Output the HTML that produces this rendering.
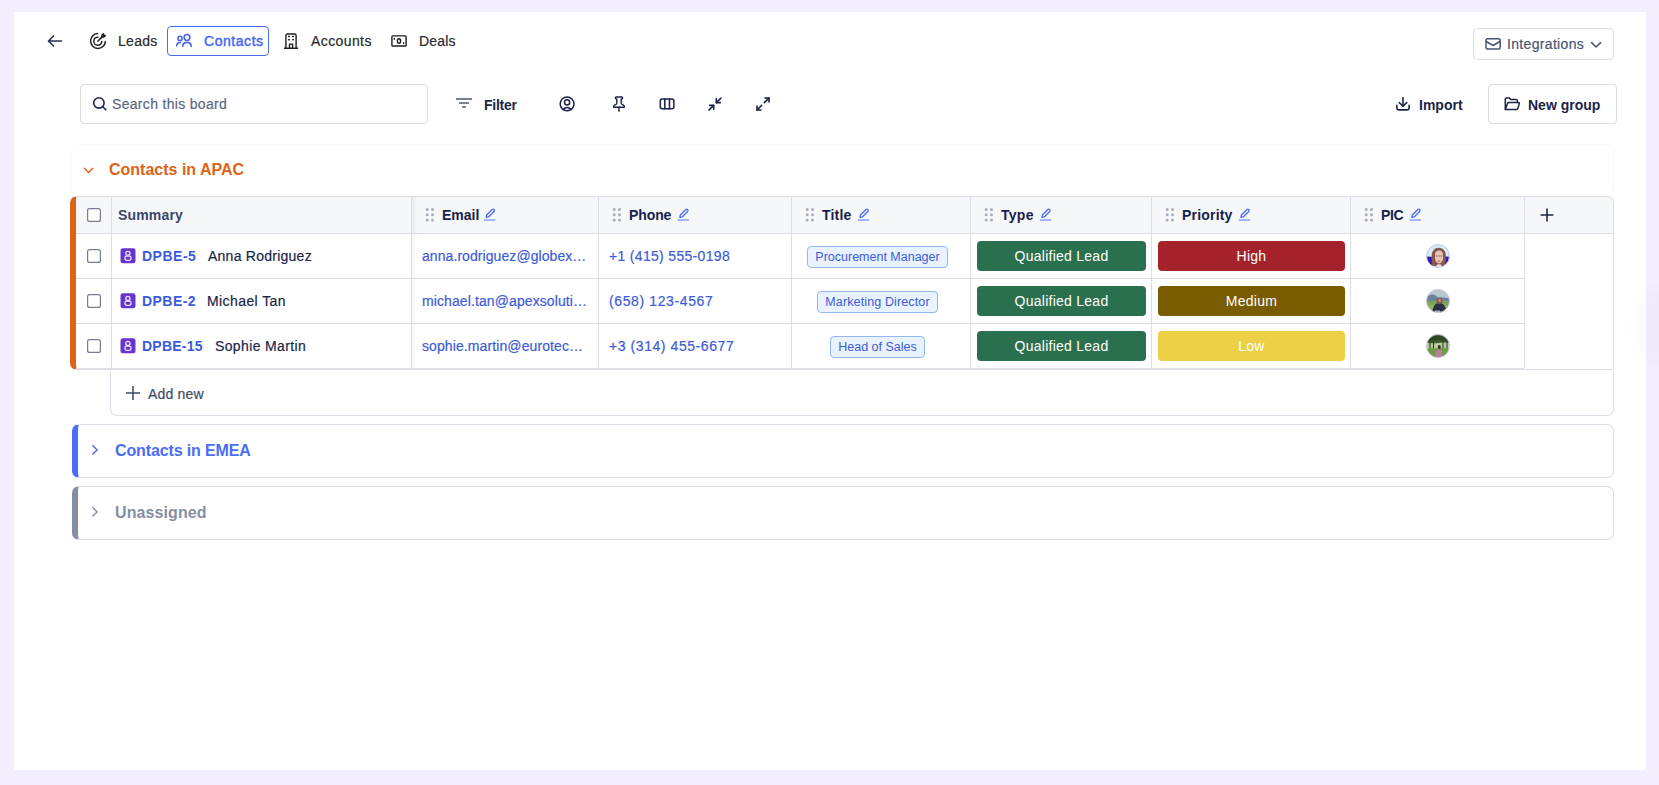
<!DOCTYPE html>
<html><head><meta charset="utf-8">
<style>
html,body{margin:0;padding:0}
body{width:1659px;height:785px;overflow:hidden;background:#f2eefd;position:relative;font-family:"Liberation Sans",sans-serif;color:#1c2548}
.panel{position:absolute;left:14px;top:12px;width:1632px;height:758px;background:#fff}
.t{position:absolute;white-space:nowrap;line-height:1;font-size:14px;-webkit-text-stroke:0.2px currentColor}
.b{-webkit-text-stroke:0}
.b{font-weight:bold}
.box{position:absolute;box-sizing:border-box}
.ln{position:absolute;background:#dcdde5}
.chip{position:absolute;box-sizing:border-box;height:22px;border:1px solid #92b6f6;background:#e9f3ff;border-radius:4px;color:#3d5bd9;font-size:12.5px;line-height:20px;text-align:center;white-space:nowrap}
.badge{position:absolute;box-sizing:border-box;height:30px;border-radius:4px;color:#fff;font-size:14px;line-height:30px;text-align:center;white-space:nowrap;letter-spacing:0.26px}
.hd{color:#18214a}
.lnk{color:#3d5bd9}
.nm{color:#1c2548}
.av{position:absolute;width:24px;height:24px;border-radius:50%;overflow:hidden;box-sizing:border-box}
svg.ov{position:absolute;left:0;top:0}
</style></head>
<body>
<div class="panel"></div>
<div style="position:absolute;left:1628px;top:280px;width:64px;height:92px;border-radius:50%;background:radial-gradient(closest-side,rgba(90,70,150,0.035),rgba(90,70,150,0.02) 70%,rgba(90,70,150,0))"></div>

<!-- NAV text -->
<span class="t" style="left:118px;top:34px;color:#2a2a2e;letter-spacing:0.3px">Leads</span>
<div class="box" style="left:167px;top:26px;width:102px;height:30px;border:1px solid #4a6cf5;border-radius:4px"></div>
<span class="t" style="left:204px;top:34px;color:#4866f6;letter-spacing:0.55px;-webkit-text-stroke:0.45px #4866f6">Contacts</span>
<span class="t" style="left:311px;top:34px;color:#2a2a2e;letter-spacing:0.4px">Accounts</span>
<span class="t" style="left:419px;top:34px;color:#2a2a2e;letter-spacing:0.15px">Deals</span>

<!-- Integrations -->
<div class="box" style="left:1473px;top:28px;width:141px;height:32px;border:1px solid #dcdde6;border-radius:4px"></div>
<span class="t" style="left:1507px;top:37px;color:#4a5572;letter-spacing:0.33px">Integrations</span>

<!-- Toolbar -->
<div class="box" style="left:80px;top:84px;width:348px;height:40px;border:1px solid #dcdde6;border-radius:4px"></div>
<span class="t" style="left:112px;top:97px;color:#5d6783;letter-spacing:0.32px">Search this board</span>
<span class="t b" style="left:484px;top:98px;color:#1c2548;letter-spacing:-0.25px">Filter</span>
<span class="t b" style="left:1419px;top:98px;color:#1c2548">Import</span>
<div class="box" style="left:1488px;top:84px;width:129px;height:40px;border:1px solid #dcdde6;border-radius:4px"></div>
<span class="t b" style="left:1528px;top:98px;color:#1c2548">New group</span>

<!-- APAC group -->
<div class="box" style="left:71px;top:144px;width:1543px;height:54px;border:1px solid #fafafb;border-radius:8px"></div>
<span class="t b" style="left:109px;top:162px;font-size:16px;color:#dc6318">Contacts in APAC</span>

<!-- TABLE -->
<div class="box" style="left:70px;top:196px;width:1544px;height:174px;border:1px solid #dcdde5;border-left:6px solid #dc6318;border-radius:7px 7px 0 7px;background:#fff;overflow:hidden">
  <div style="position:absolute;left:0;top:0;right:0;height:36px;background:#f6f7f9"></div>
</div>
<!-- header bottom + row lines -->
<div class="ln" style="left:76px;top:233px;width:1537px;height:1px"></div>
<div class="ln" style="left:76px;top:278px;width:1448px;height:1px"></div>
<div class="ln" style="left:76px;top:323px;width:1448px;height:1px"></div>
<div class="ln" style="left:76px;top:368px;width:1448px;height:1px"></div>
<!-- vertical dividers -->
<div class="ln" style="left:111px;top:197px;width:1px;height:171px"></div>
<div class="ln" style="left:411px;top:197px;width:1px;height:171px"></div>
<div class="ln" style="left:598px;top:197px;width:1px;height:171px"></div>
<div class="ln" style="left:791px;top:197px;width:1px;height:171px"></div>
<div class="ln" style="left:970px;top:197px;width:1px;height:171px"></div>
<div class="ln" style="left:1151px;top:197px;width:1px;height:171px"></div>
<div class="ln" style="left:1350px;top:197px;width:1px;height:171px"></div>
<div class="ln" style="left:1524px;top:197px;width:1px;height:171px"></div>
<!-- sticky shadow -->
<div style="position:absolute;left:412px;top:197px;width:5px;height:171px;background:linear-gradient(90deg,rgba(30,40,80,0.05),rgba(30,40,80,0))"></div>

<!-- header text -->
<span class="t b" style="left:118px;top:208px;color:#3b4666;letter-spacing:0.17px">Summary</span>
<span class="t b hd" style="left:442px;top:208px">Email</span>
<span class="t b hd" style="left:629px;top:208px;letter-spacing:-0.1px">Phone</span>
<span class="t b hd" style="left:822px;top:208px;letter-spacing:0.2px">Title</span>
<span class="t b hd" style="left:1001px;top:208px;letter-spacing:0.27px">Type</span>
<span class="t b hd" style="left:1182px;top:208px;letter-spacing:0.19px">Priority</span>
<span class="t b hd" style="left:1381px;top:208px;letter-spacing:-0.35px">PIC</span>

<!-- rows: summary -->
<span class="t b lnk" style="left:142px;top:249px;color:#3b5bdb;letter-spacing:0.5px">DPBE-5</span>
<span class="t nm" style="left:208px;top:249px;letter-spacing:0.25px">Anna Rodriguez</span>
<span class="t b lnk" style="left:142px;top:294px;color:#3b5bdb;letter-spacing:0.44px">DPBE-2</span>
<span class="t nm" style="left:207px;top:294px;letter-spacing:0.41px">Michael Tan</span>
<span class="t b lnk" style="left:142px;top:339px;color:#3b5bdb;letter-spacing:0.22px">DPBE-15</span>
<span class="t nm" style="left:215px;top:339px;letter-spacing:0.37px">Sophie Martin</span>

<!-- email -->
<span class="t lnk" style="left:422px;top:249px;letter-spacing:0.07px">anna.rodriguez@globex…</span>
<span class="t lnk" style="left:422px;top:294px;letter-spacing:0.1px">michael.tan@apexsoluti…</span>
<span class="t lnk" style="left:422px;top:339px;letter-spacing:0.1px">sophie.martin@eurotec…</span>
<!-- phone -->
<span class="t lnk" style="left:609px;top:249px;letter-spacing:0.32px">+1 (415) 555-0198</span>
<span class="t lnk" style="left:609px;top:294px;letter-spacing:0.62px">(658) 123-4567</span>
<span class="t lnk" style="left:609px;top:339px;letter-spacing:0.57px">+3 (314) 455-6677</span>
<!-- title chips -->
<div class="chip" style="left:807px;top:246px;width:141px">Procurement Manager</div>
<div class="chip" style="left:817px;top:291px;width:121px;letter-spacing:0.13px">Marketing Director</div>
<div class="chip" style="left:830px;top:336px;width:95px">Head of Sales</div>
<!-- type -->
<div class="badge" style="left:977px;top:241px;width:169px;background:#2b704e">Qualified Lead</div>
<div class="badge" style="left:977px;top:286px;width:169px;background:#2b704e">Qualified Lead</div>
<div class="badge" style="left:977px;top:331px;width:169px;background:#2b704e">Qualified Lead</div>
<!-- priority -->
<div class="badge" style="left:1158px;top:241px;width:187px;background:#a6222b">High</div>
<div class="badge" style="left:1158px;top:286px;width:187px;background:#7a5c00">Medium</div>
<div class="badge" style="left:1158px;top:331px;width:187px;background:#edd046">Low</div>

<!-- Add new -->
<div class="box" style="left:110px;top:371px;width:1504px;height:45px;border:1px solid #dcdde5;border-top:none;border-radius:0 0 7px 7px"></div>
<span class="t" style="left:148px;top:387px;color:#3d4a66;letter-spacing:0.2px">Add new</span>

<!-- EMEA -->
<div class="box" style="left:72px;top:424px;width:1542px;height:54px;border:1px solid #dcdde5;border-left:6px solid #4a6cf7;border-radius:7px"></div>
<span class="t b" style="left:115px;top:443px;font-size:16px;color:#4a6cf7;letter-spacing:-0.13px">Contacts in EMEA</span>
<!-- Unassigned -->
<div class="box" style="left:72px;top:486px;width:1542px;height:54px;border:1px solid #dcdde5;border-left:6px solid #868ea3;border-radius:7px"></div>
<span class="t b" style="left:115px;top:505px;font-size:16px;color:#868ea3;letter-spacing:0.1px">Unassigned</span>

<!-- ICONS overlay -->
<svg class="ov" width="1659" height="785" fill="none" stroke-linecap="round" stroke-linejoin="round">
  <!-- back arrow -->
  <path d="M48.5 41H61.5M53.5 36L48.5 41L53.5 46" stroke="#2a3453" stroke-width="1.7"/>
  <!-- leads target-arrow -->
  <g stroke="#1f1f23" stroke-width="1.5">
    <path d="M97.6 33.6A7.4 7.4 0 1 0 105.4 41.6"/>
    <path d="M97.8 37.2A4 4 0 1 0 101.8 41.4"/>
    <path d="M98 41L101.9 37.1"/>
    <path d="M101.9 37.1V35.3L103.5 33.7V35.5H105.3L103.7 37.1Z"/>
  </g>
  <!-- contacts users -->
  <g stroke="#4263eb" stroke-width="1.5">
    <circle cx="180" cy="38.4" r="2.1"/>
    <circle cx="187" cy="37.5" r="2.9"/>
    <path d="M176.6 45.8Q176.8 42.6 180.6 42.5"/>
    <path d="M182.8 46.4V45.6Q183 42.6 186.4 42.5H187.6Q191 42.6 191.2 45.6V46.4"/>
  </g>
  <!-- accounts building -->
  <g stroke="#1f1f23" stroke-width="1.4">
    <path d="M285.9 48.2V35.6Q285.9 34 287.5 34H294.5Q296.1 34 296.1 35.6V48.2"/>
    <path d="M284.5 48.3H297.5"/>
    <path d="M289.5 48.2V44.1H292.6V48.2"/>
    <path d="M288.7 36.5H289.3M292.7 36.5H293.3M288.7 39.7H289.3M292.7 39.7H293.3" stroke-width="1.6"/>
  </g>
  <!-- deals banknote -->
  <g stroke="#1f1f23" stroke-width="1.4">
    <rect x="391.9" y="35.9" width="14.2" height="10.1" rx="0.8"/>
    <ellipse cx="399" cy="41" rx="1.6" ry="2.3"/>
    <path d="M394.3 38.4V39.2M403.6 42.8V43.6"/>
  </g>
  <!-- search -->
  <g stroke="#1c2548" stroke-width="1.6">
    <circle cx="98.9" cy="102.9" r="5.2"/>
    <path d="M102.8 106.8L105.8 109.8"/>
  </g>
  <!-- filter -->
  <g stroke="#7b8399" stroke-width="1.8" stroke-linecap="butt">
    <path d="M456 99H472M459 103H469M462 107H466"/>
  </g>
  <!-- user circle -->
  <g stroke="#18214a" stroke-width="1.5">
    <circle cx="567.1" cy="103.9" r="6.9"/>
    <circle cx="567.1" cy="102.3" r="2.6"/>
    <path d="M563 109.4Q567.1 105.6 571.2 109.4"/>
  </g>
  <!-- pin -->
  <g stroke="#18214a" stroke-width="1.4">
    <path d="M619 107.2V111.3"/>
    <path d="M616.8 98.9V103Q616.8 104 615.9 104.5L614.6 105.2Q613.7 105.7 613.7 106.6V107.2H624.3V106.6Q624.3 105.7 623.4 105.2L622.1 104.5Q621.2 104 621.2 103V98.9H621.8Q622.6 98.9 622.6 97.9Q622.6 97 621.8 97H616.2Q615.4 97 615.4 97.9Q615.4 98.9 616.2 98.9Z"/>
  </g>
  <!-- columns -->
  <g stroke="#18214a" stroke-width="1.5">
    <rect x="660.3" y="99" width="13.6" height="9.7" rx="2"/>
    <path d="M664.8 99V108.7M669.5 99V108.7"/>
  </g>
  <!-- minimize-2 -->
  <g transform="translate(707 96) scale(0.6667)" stroke="#18214a" stroke-width="2.4">
    <polyline points="4 14 10 14 10 20"/><polyline points="20 10 14 10 14 4"/><line x1="14" x2="21" y1="10" y2="3"/><line x1="3" x2="10" y1="21" y2="14"/>
  </g>
  <!-- maximize-2 -->
  <g transform="translate(755 96) scale(0.6667)" stroke="#18214a" stroke-width="2.4">
    <polyline points="15 3 21 3 21 9"/><polyline points="9 21 3 21 3 15"/><line x1="21" x2="14" y1="3" y2="10"/><line x1="3" x2="10" y1="21" y2="14"/>
  </g>
  <!-- mail -->
  <g stroke="#475374" stroke-width="1.5">
    <rect x="1486" y="38.8" width="14.2" height="10.1" rx="1.8"/>
    <path d="M1486.2 41.5L1492.3 45Q1493.1 45.5 1493.9 45L1500 41.5"/>
  </g>
  <!-- chevron down -->
  <path d="M1591.6 42.6L1596.1 47L1600.6 42.6" stroke="#475374" stroke-width="1.5"/>
  <!-- download -->
  <g stroke="#1c2548" stroke-width="1.6">
    <path d="M1403 97.8V106.3"/>
    <path d="M1399.3 102.6L1403 106.3L1406.7 102.6"/>
    <path d="M1396.9 105.4V108.3Q1396.9 109.9 1398.5 109.9H1407.5Q1409.1 109.9 1409.1 108.3V105.4"/>
  </g>
  <!-- folder open -->
  <g stroke="#1c2548" stroke-width="1.5">
    <path d="M1505.3 109.6V98.9Q1505.3 97.9 1506.3 97.9H1509.2L1510.8 99.5H1516.3Q1517.3 99.5 1517.3 100.5V102.5"/>
    <path d="M1505.3 109.6L1507.5 103.4Q1507.8 102.5 1508.8 102.5H1518.5Q1519.6 102.5 1519.3 103.5L1517.7 108.9Q1517.4 109.6 1516.6 109.6Z"/>
  </g>
  <!-- APAC chevron -->
  <path d="M84.4 168.2L88.55 172.4L92.7 168.2" stroke="#dc6318" stroke-width="1.4"/>
  <!-- header checkbox & row checkboxes -->
  <g stroke="#737c94" stroke-width="1.2" fill="#fff">
    <rect x="87.6" y="208.6" width="12.8" height="12.8" rx="2"/>
    <rect x="87.6" y="249.6" width="12.8" height="12.8" rx="2"/>
    <rect x="87.6" y="294.6" width="12.8" height="12.8" rx="2"/>
    <rect x="87.6" y="339.6" width="12.8" height="12.8" rx="2"/>
  </g>
  <!-- drag dots -->
  <g fill="#a6acbb" stroke="none" id="dots">
    <circle cx="427.2" cy="209.6" r="1.5"/><circle cx="432.5" cy="209.6" r="1.5"/>
    <circle cx="427.2" cy="214.8" r="1.5"/><circle cx="432.5" cy="214.8" r="1.5"/>
    <circle cx="427.2" cy="220.1" r="1.5"/><circle cx="432.5" cy="220.1" r="1.5"/>
  </g>
  <use href="#dots" x="187"/>
  <use href="#dots" x="380"/>
  <use href="#dots" x="559"/>
  <use href="#dots" x="740"/>
  <use href="#dots" x="939"/>
  <!-- pencils -->
  <g id="pen">
    <path d="M486.3 217.4L486.7 215.1L492.2 209.6Q493.1 208.7 494 209.6Q494.9 210.5 494 211.4L488.5 216.9Z" stroke="#4c6ef5" stroke-width="1.35"/>
    <path d="M484 220H495.4" stroke="#91a7ff" stroke-width="1.6" stroke-linecap="butt"/>
  </g>
  <use href="#pen" x="193.6"/>
  <use href="#pen" x="373.8"/>
  <use href="#pen" x="555.7"/>
  <use href="#pen" x="754.7"/>
  <use href="#pen" x="925.6"/>
  <!-- plus header -->
  <path d="M1547 208.6V221.4M1540.6 215H1553.4" stroke="#1c2548" stroke-width="1.6" stroke-linecap="butt"/>
  <!-- lock icons -->
  <g id="lock">
    <rect x="120.5" y="248.3" width="15" height="15" rx="2.5" fill="#6834cf" stroke="none"/>
    <circle cx="127.9" cy="253.4" r="2.1" stroke="#ece6fa" stroke-width="1.3"/>
    <rect x="124.9" y="256.1" width="6.2" height="4.3" rx="1.8" stroke="#ece6fa" stroke-width="1.3"/>
  </g>
  <use href="#lock" y="45"/>
  <use href="#lock" y="90"/>
  <!-- add new plus -->
  <path d="M133 386V400M126 393H140" stroke="#3d4a66" stroke-width="1.5" stroke-linecap="butt"/>
  <!-- EMEA chevron -->
  <path d="M92.8 445.6L97.1 449.9L92.8 454.1" stroke="#4a6cf7" stroke-width="1.4"/>
  <path d="M92.8 507.6L97.1 511.9L92.8 516.1" stroke="#868ea3" stroke-width="1.4"/>
</svg>

<!-- avatars -->
<svg width="1659" height="785" style="position:absolute;left:0;top:0;pointer-events:none">
  <defs>
    <filter id="bl" x="-10%" y="-10%" width="120%" height="120%"><feGaussianBlur stdDeviation="0.45"/></filter>
    <clipPath id="cp"><circle cx="12" cy="12" r="11.5"/></clipPath>
  </defs>
  <g transform="translate(1426 244)">
    <g clip-path="url(#cp)"><g filter="url(#bl)">
      <rect x="-2" y="-2" width="28" height="28" fill="#d8e9f8"/>
      <path d="M0 13Q2 12 6 13L7 24H0Z" fill="#2e12b4"/>
      <path d="M24 13Q21 12 18 13L17 24H24Z" fill="#2e12b4"/>
      <path d="M6 22Q5 14 6 9Q8 3.5 13 3.8Q18 4 19.5 9Q20.5 15 19 22Z" fill="#86584c"/>
      <path d="M9 9.5Q10 6.5 13 6.5Q16.5 6.7 17 10L17 15Q16 19 13 19.5Q10 19 9 15Z" fill="#e9c5b5"/>
      <path d="M9.5 12H16.8" stroke="#6a4a50" stroke-width="0.6"/>
      <ellipse cx="13" cy="17" rx="1.6" ry="0.7" fill="#d8606a"/>
      <path d="M10 24L11 20.5Q13 19.8 15 20.5L16 24Z" fill="#e4e0e8"/>
    </g></g>
    <circle cx="12" cy="12" r="11.5" fill="none" stroke="#c8cadc" stroke-width="1"/>
  </g>
  <g transform="translate(1426 289)">
    <g clip-path="url(#cp)"><g filter="url(#bl)">
      <rect x="-2" y="-2" width="28" height="28" fill="#b9c7cf"/>
      <path d="M-2 11Q3 5 7 5.5Q10 6 12 8.5Q16 7.5 26 10V26H-2Z" fill="#6c8298"/>
      <path d="M-2 13Q6 11 12 12.5Q18 11 26 13V26H-2Z" fill="#7fa35a"/>
      <path d="M-2 17Q8 15 26 17V26H-2Z" fill="#98b25c"/>
      <path d="M11 9.5Q13 8 15.5 9.5L16.5 14H10.5Z" fill="#8c5234"/>
      <path d="M6 24Q7 16 10.5 14.5H16Q19.5 16 21 24Z" fill="#2c3242"/>
      <ellipse cx="13.6" cy="11.5" rx="1.4" ry="1.8" fill="#c69080"/>
      <path d="M9 24V21.5H14V24Z" fill="#a8a8b8"/>
    </g></g>
    <circle cx="12" cy="12" r="11.5" fill="none" stroke="#c8cadc" stroke-width="1"/>
  </g>
  <g transform="translate(1426 334)">
    <g clip-path="url(#cp)"><g filter="url(#bl)">
      <rect x="-2" y="-2" width="28" height="28" fill="#3f6030"/>
      <path d="M-2 8Q6 10 12 9Q18 8 26 9V15H-2Z" fill="#b8cca0"/>
      <path d="M4 6V18M7.5 7V16M17 7V17M21 6V18" stroke="#2e3a26" stroke-width="1.1"/>
      <path d="M-2 15Q12 13 26 15V26H-2Z" fill="#6e9c42"/>
      <path d="M-2 -2H26V8Q12 5 -2 8Z" fill="#2f4a26"/>
      <path d="M9.5 24L10 16Q13 14.5 16 16L16.5 24Z" fill="#b68096"/>
      <ellipse cx="13.3" cy="13" rx="1.5" ry="1.9" fill="#3c2c2c"/>
    </g></g>
    <circle cx="12" cy="12" r="11.5" fill="none" stroke="#c8cadc" stroke-width="1"/>
  </g>
</svg>

</body></html>
